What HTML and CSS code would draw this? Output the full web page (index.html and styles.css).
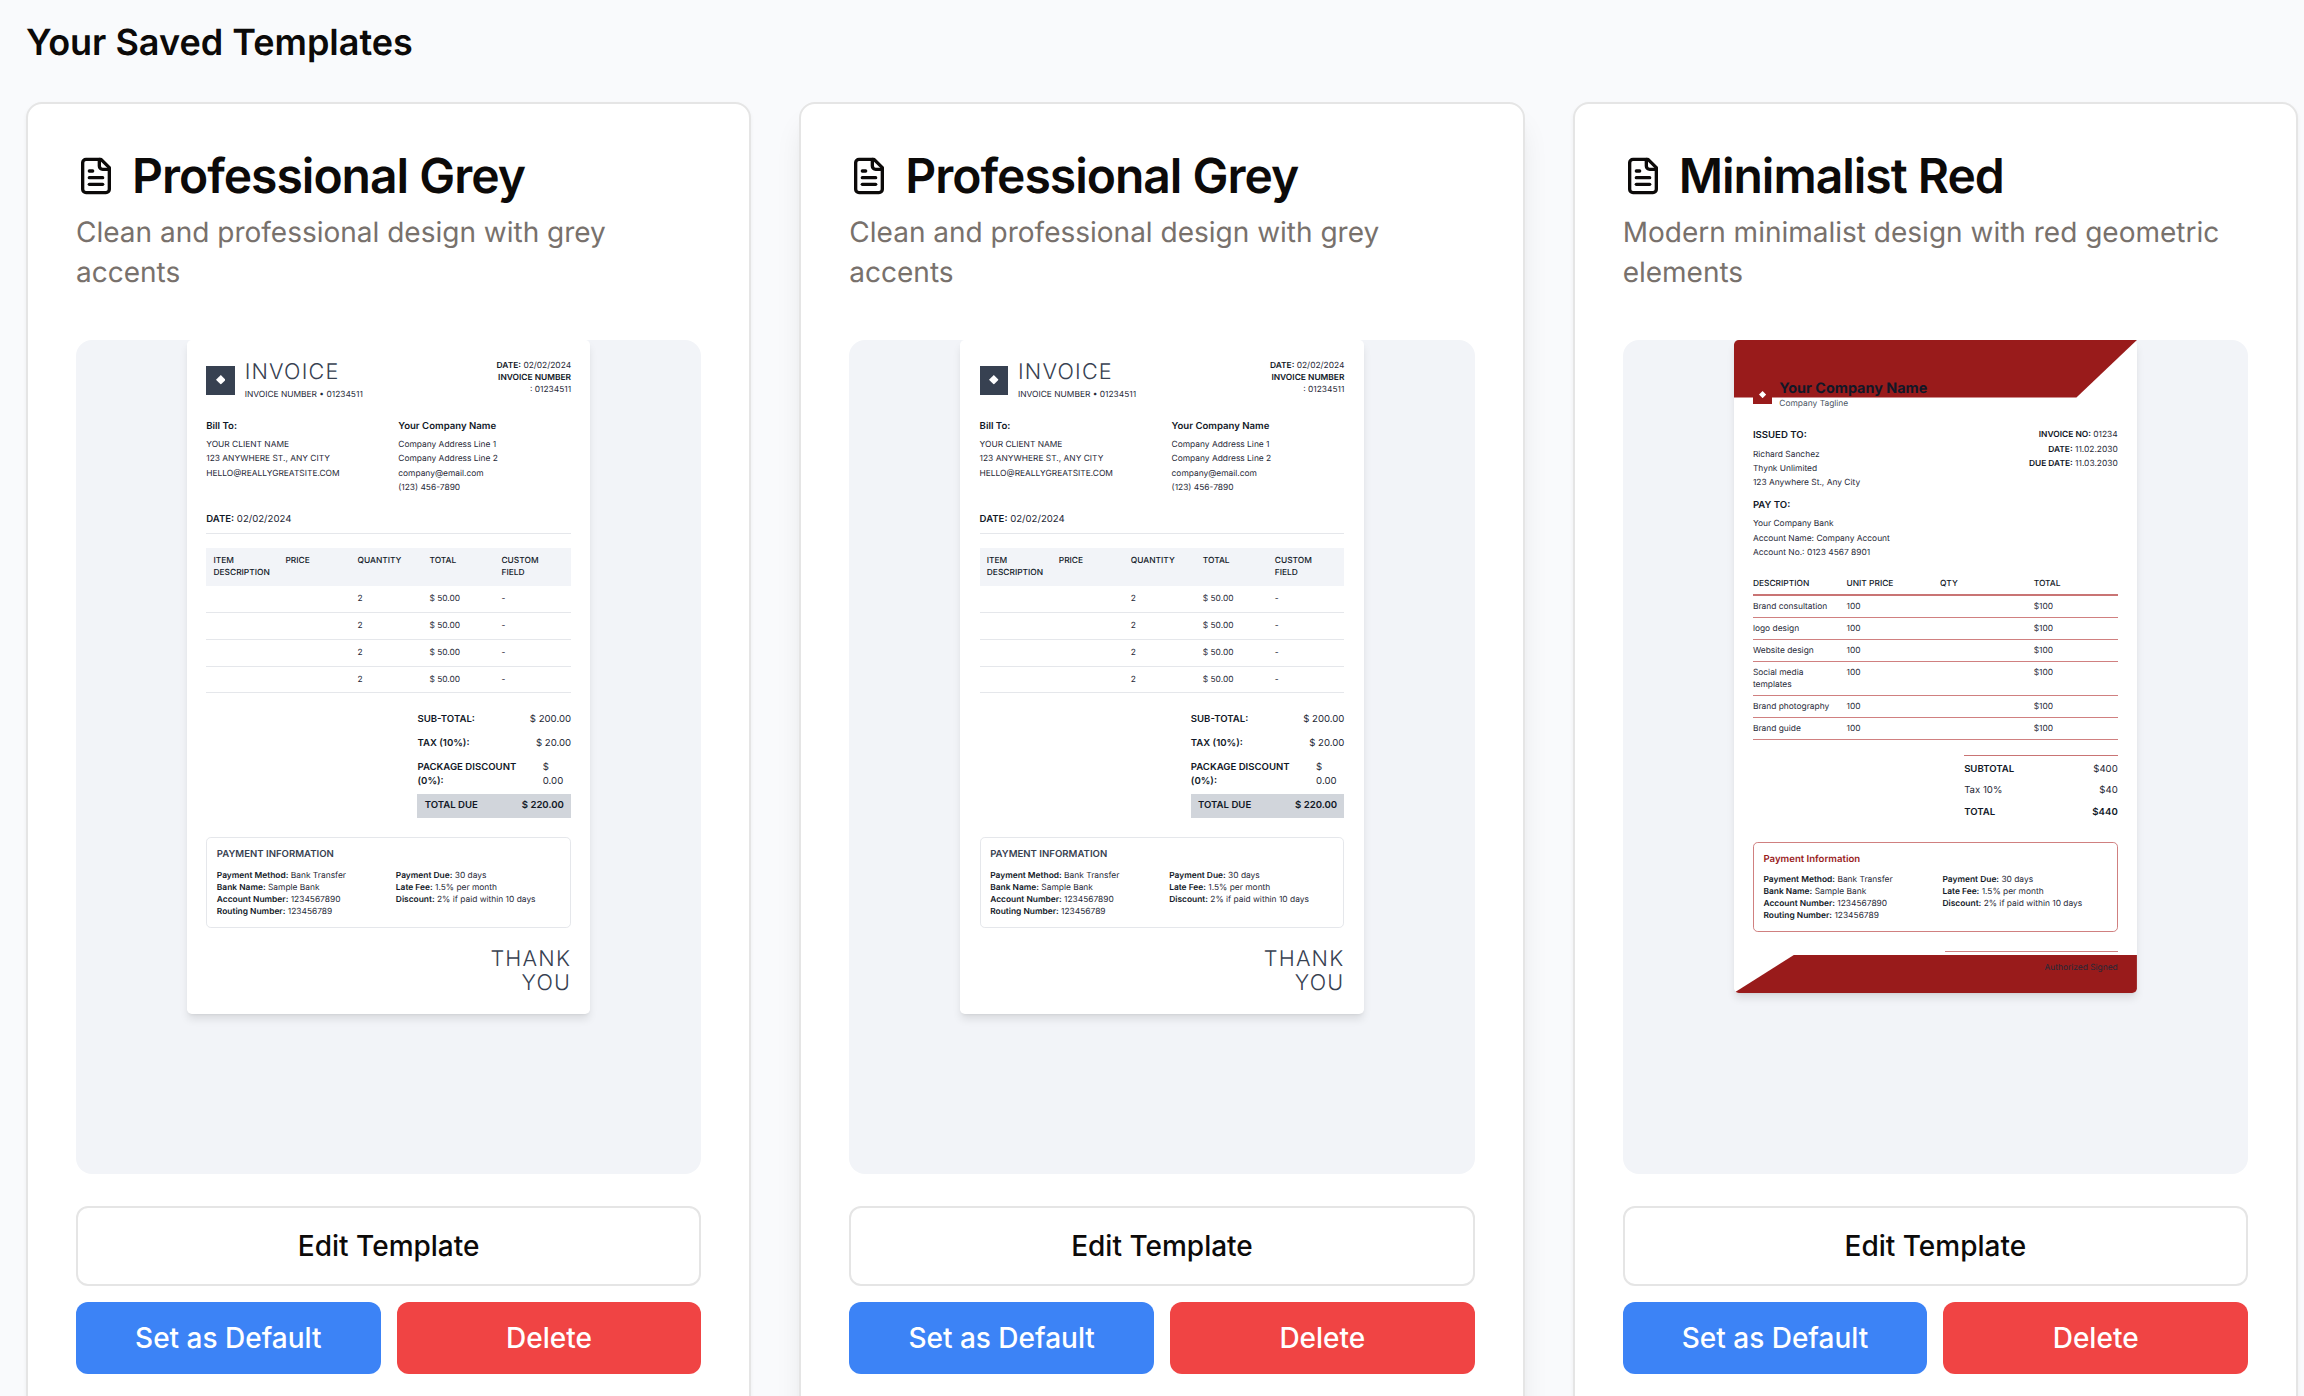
FILE: index.html
```html
<!DOCTYPE html>
<html lang="en">
<head>
<meta charset="utf-8">
<meta name="viewport" content="width=device-width, initial-scale=1">
<title>Your Saved Templates</title>
<link rel="stylesheet" href="styles.css">
</head>
<body>
<svg class="sprite" aria-hidden="true">
  <symbol id="file-text" viewBox="0 0 24 24">
    <path d="M15 2H6a2 2 0 0 0-2 2v16a2 2 0 0 0 2 2h12a2 2 0 0 0 2-2V7Z"/>
    <path d="M14 2v4a2 2 0 0 0 2 2h4"/>
    <path d="M10 9H8"/>
    <path d="M16 13H8"/>
    <path d="M16 17H8"/>
  </symbol>
  <symbol id="diamond" viewBox="0 0 16 16">
    <path d="M8 0L16 8L8 16L0 8Z"/>
  </symbol>
</svg>
<main class="page">
  <h2 class="page-title">Your Saved Templates</h2>
  <div class="cards">

    <article class="card">
      <header class="card-header">
        <h3 class="card-title"><svg class="icon"><use href="#file-text"/></svg>Professional Grey</h3>
        <p class="card-text">Clean and professional design with grey accents</p>
      </header>
      <div class="preview">
        <section class="doc grey">
          <div class="doc-head">
            <div class="brand">
              <div class="logo"><svg class="mark"><use href="#diamond"/></svg></div>
              <div>
                <h4 class="display">INVOICE</h4>
                <p class="number">INVOICE NUMBER • 01234511</p>
              </div>
            </div>
            <p class="meta"><b>DATE:</b> 02/02/2024<br><b>INVOICE NUMBER</b><br>: 01234511</p>
          </div>
          <div class="parties">
            <div class="lines"><h5>Bill To:</h5><p>YOUR CLIENT NAME</p><p>123 ANYWHERE ST., ANY CITY</p><p>HELLO@REALLYGREATSITE.COM</p></div>
            <div class="lines"><h5>Your Company Name</h5><p>Company Address Line 1</p><p>Company Address Line 2</p><p>company@email.com</p><p>(123) 456-7890</p></div>
          </div>
          <p class="dated"><b>DATE:</b> 02/02/2024</p>
          <table class="items">
            <thead><tr><th>ITEM DESCRIPTION</th><th>PRICE</th><th>QUANTITY</th><th>TOTAL</th><th>CUSTOM<br>FIELD</th></tr></thead>
            <tbody>
              <tr><td></td><td></td><td>2</td><td>$ 50.00</td><td>-</td></tr>
              <tr><td></td><td></td><td>2</td><td>$ 50.00</td><td>-</td></tr>
              <tr><td></td><td></td><td>2</td><td>$ 50.00</td><td>-</td></tr>
              <tr><td></td><td></td><td>2</td><td>$ 50.00</td><td>-</td></tr>
            </tbody>
          </table>
          <div class="totals">
            <div class="sum"><b>SUB-TOTAL:</b><span>$ 200.00</span></div>
            <div class="sum"><b>TAX (10%):</b><span>$ 20.00</span></div>
            <div class="sum"><b>PACKAGE DISCOUNT (0%):</b><span class="discount">$ 0.00</span></div>
            <div class="sum due"><b>TOTAL DUE</b><b>$ 220.00</b></div>
          </div>
          <div class="payment">
            <h5>PAYMENT INFORMATION</h5>
            <div class="payment-grid">
              <div><p><b>Payment Method:</b> Bank Transfer</p><p><b>Bank Name:</b> Sample Bank</p><p><b>Account Number:</b> 1234567890</p><p><b>Routing Number:</b> 123456789</p></div>
              <div><p><b>Payment Due:</b> 30 days</p><p><b>Late Fee:</b> 1.5% per month</p><p><b>Discount:</b> 2% if paid within 10 days</p></div>
            </div>
          </div>
          <p class="display thanks">THANK<br>YOU</p>
        </section>
      </div>
      <footer class="actions">
        <button type="button" class="btn outline">Edit Template</button>
        <div class="pair">
          <button type="button" class="btn primary">Set as Default</button>
          <button type="button" class="btn danger">Delete</button>
        </div>
      </footer>
    </article>

    <article class="card raised">
      <header class="card-header">
        <h3 class="card-title"><svg class="icon"><use href="#file-text"/></svg>Professional Grey</h3>
        <p class="card-text">Clean and professional design with grey accents</p>
      </header>
      <div class="preview">
        <section class="doc grey">
          <div class="doc-head">
            <div class="brand">
              <div class="logo"><svg class="mark"><use href="#diamond"/></svg></div>
              <div>
                <h4 class="display">INVOICE</h4>
                <p class="number">INVOICE NUMBER • 01234511</p>
              </div>
            </div>
            <p class="meta"><b>DATE:</b> 02/02/2024<br><b>INVOICE NUMBER</b><br>: 01234511</p>
          </div>
          <div class="parties">
            <div class="lines"><h5>Bill To:</h5><p>YOUR CLIENT NAME</p><p>123 ANYWHERE ST., ANY CITY</p><p>HELLO@REALLYGREATSITE.COM</p></div>
            <div class="lines"><h5>Your Company Name</h5><p>Company Address Line 1</p><p>Company Address Line 2</p><p>company@email.com</p><p>(123) 456-7890</p></div>
          </div>
          <p class="dated"><b>DATE:</b> 02/02/2024</p>
          <table class="items">
            <thead><tr><th>ITEM DESCRIPTION</th><th>PRICE</th><th>QUANTITY</th><th>TOTAL</th><th>CUSTOM<br>FIELD</th></tr></thead>
            <tbody>
              <tr><td></td><td></td><td>2</td><td>$ 50.00</td><td>-</td></tr>
              <tr><td></td><td></td><td>2</td><td>$ 50.00</td><td>-</td></tr>
              <tr><td></td><td></td><td>2</td><td>$ 50.00</td><td>-</td></tr>
              <tr><td></td><td></td><td>2</td><td>$ 50.00</td><td>-</td></tr>
            </tbody>
          </table>
          <div class="totals">
            <div class="sum"><b>SUB-TOTAL:</b><span>$ 200.00</span></div>
            <div class="sum"><b>TAX (10%):</b><span>$ 20.00</span></div>
            <div class="sum"><b>PACKAGE DISCOUNT (0%):</b><span class="discount">$ 0.00</span></div>
            <div class="sum due"><b>TOTAL DUE</b><b>$ 220.00</b></div>
          </div>
          <div class="payment">
            <h5>PAYMENT INFORMATION</h5>
            <div class="payment-grid">
              <div><p><b>Payment Method:</b> Bank Transfer</p><p><b>Bank Name:</b> Sample Bank</p><p><b>Account Number:</b> 1234567890</p><p><b>Routing Number:</b> 123456789</p></div>
              <div><p><b>Payment Due:</b> 30 days</p><p><b>Late Fee:</b> 1.5% per month</p><p><b>Discount:</b> 2% if paid within 10 days</p></div>
            </div>
          </div>
          <p class="display thanks">THANK<br>YOU</p>
        </section>
      </div>
      <footer class="actions">
        <button type="button" class="btn outline">Edit Template</button>
        <div class="pair">
          <button type="button" class="btn primary">Set as Default</button>
          <button type="button" class="btn danger">Delete</button>
        </div>
      </footer>
    </article>

    <article class="card">
      <header class="card-header">
        <h3 class="card-title"><svg class="icon"><use href="#file-text"/></svg>Minimalist Red</h3>
        <p class="card-text">Modern minimalist design with red geometric elements</p>
      </header>
      <div class="preview">
        <section class="doc red">
          <div class="banner"></div>
          <div class="brand">
            <div class="logo"><svg class="mark"><use href="#diamond"/></svg></div>
            <div>
              <h4 class="company">Your Company Name</h4>
              <p class="tagline">Company Tagline</p>
            </div>
          </div>
          <div class="issue">
            <div>
              <div class="lines"><h5>ISSUED TO:</h5><p>Richard Sanchez</p><p>Thynk Unlimited</p><p>123 Anywhere St., Any City</p></div>
              <div class="lines"><h5>PAY TO:</h5><p>Your Company Bank</p><p>Account Name: Company Account</p><p>Account No.: 0123 4567 8901</p></div>
            </div>
            <div class="lines refs"><p><b>INVOICE NO:</b> 01234</p><p><b>DATE:</b> 11.02.2030</p><p><b>DUE DATE:</b> 11.03.2030</p></div>
          </div>
          <table class="items">
            <thead><tr><th>DESCRIPTION</th><th>UNIT PRICE</th><th>QTY</th><th>TOTAL</th></tr></thead>
            <tbody>
              <tr><td>Brand consultation</td><td>100</td><td></td><td>$100</td></tr>
              <tr><td>logo design</td><td>100</td><td></td><td>$100</td></tr>
              <tr><td>Website design</td><td>100</td><td></td><td>$100</td></tr>
              <tr><td>Social media<br>templates</td><td>100</td><td></td><td>$100</td></tr>
              <tr><td>Brand photography</td><td>100</td><td></td><td>$100</td></tr>
              <tr><td>Brand guide</td><td>100</td><td></td><td>$100</td></tr>
            </tbody>
          </table>
          <div class="totals">
            <div class="sum"><b>SUBTOTAL</b><span>$400</span></div>
            <div class="sum"><span>Tax 10%</span><span>$40</span></div>
            <div class="sum"><b>TOTAL</b><b>$440</b></div>
          </div>
          <div class="payment">
            <h5>Payment Information</h5>
            <div class="payment-grid">
              <div><p><b>Payment Method:</b> Bank Transfer</p><p><b>Bank Name:</b> Sample Bank</p><p><b>Account Number:</b> 1234567890</p><p><b>Routing Number:</b> 123456789</p></div>
              <div><p><b>Payment Due:</b> 30 days</p><p><b>Late Fee:</b> 1.5% per month</p><p><b>Discount:</b> 2% if paid within 10 days</p></div>
            </div>
          </div>
          <div class="base"></div>
          <p class="signed">Authorized Signed</p>
        </section>
      </div>
      <footer class="actions">
        <button type="button" class="btn outline">Edit Template</button>
        <div class="pair">
          <button type="button" class="btn primary">Set as Default</button>
          <button type="button" class="btn danger">Delete</button>
        </div>
      </footer>
    </article>

  </div>
</main>
</body>
</html>
```
FILE: styles.css
```css
* { box-sizing: border-box; margin: 0; padding: 0; }

body {
  background: #f9fafc;
  color: #0c0a09;
  font-family: Inter, "Liberation Sans", sans-serif;
  text-rendering: geometricPrecision;
}

.sprite { display: none; }

.page { padding: 14px 6px 48px 26px; }

.page-title {
  font-size: 36px;
  line-height: 56px;
  font-weight: 600;
  margin-bottom: 32px;
}

.cards {
  display: grid;
  grid-template-columns: repeat(3, minmax(0, 1fr));
  gap: 48px;
}

.card {
  background: #fff;
  border: 2px solid #e5e5e5;
  border-radius: 16px;
  padding: 48px;
  box-shadow: 0 2px 4px rgb(0 0 0 / 5%);
}

.card.raised {
  box-shadow: 0 20px 30px -6px rgb(0 0 0 / 10%), 0 8px 12px -8px rgb(0 0 0 / 10%);
}

.card-header {
  display: flex;
  flex-direction: column;
  gap: 12px;
  margin-bottom: 48px;
}

.card-title {
  display: flex;
  align-items: center;
  gap: 16px;
  font-size: 48px;
  line-height: 48px;
  font-weight: 600;
  letter-spacing: -1px;
}

.icon {
  width: 40px;
  height: 40px;
  fill: none;
  stroke: currentColor;
  stroke-width: 2;
  stroke-linecap: round;
  stroke-linejoin: round;
}

.card-text {
  color: #78716c;
  font-size: 28px;
  line-height: 40px;
}

.preview {
  aspect-ratio: 3 / 4;
  display: flex;
  justify-content: center;
  align-items: flex-start;
  overflow: hidden;
  background: #f2f4f8;
  border-radius: 16px;
  margin-bottom: 32px;
}

.actions {
  display: flex;
  flex-direction: column;
  gap: 16px;
}

.pair {
  display: grid;
  grid-template-columns: 1fr 1fr;
  gap: 16px;
}

.btn {
  height: 72px;
  border: 0;
  border-radius: 12px;
  color: #fff;
  font: inherit;
  font-size: 28px;
  line-height: 40px;
  font-weight: 500;
  cursor: pointer;
}

.btn.outline {
  height: 80px;
  background: #fff;
  border: 2px solid #e5e5e5;
  color: #0c0a09;
}

.btn.primary { background: #3c83f6; }
.btn.danger { background: #f04444; }

/* Invoice thumbnails: full-size documents shown at 60% */

.doc {
  zoom: 0.6;
  position: relative;
  flex: none;
  width: 672px;
  padding: 33px 32px 32px;
  background: #fff;
  border-radius: 8px;
  box-shadow: 0 10px 15px -3px rgb(0 0 0 / 10%), 0 4px 6px -4px rgb(0 0 0 / 10%);
  color: #1f2937;
  font-size: 14px;
  line-height: 20px;
}

.doc b {
  color: #111827;
  font-weight: 600;
}

.doc h5 {
  color: #111827;
  font-size: 16px;
  line-height: 24px;
  font-weight: 600;
}

.brand {
  display: flex;
  align-items: center;
  gap: 16px;
}

.logo {
  display: flex;
  align-items: center;
  justify-content: center;
  width: 48px;
  height: 48px;
  background: #374151;
}

.mark {
  width: 16px;
  height: 16px;
  fill: #fff;
}

.doc-head {
  display: flex;
  justify-content: space-between;
  align-items: flex-start;
  margin-bottom: 32px;
}

.display {
  color: #374151;
  font-size: 36px;
  line-height: 40px;
  font-weight: 300;
  letter-spacing: 2px;
}

.number { margin-top: 8px; }

.meta { text-align: right; }

.parties {
  display: grid;
  grid-template-columns: 1fr 1fr;
  gap: 32px;
  margin-bottom: 32px;
}

.lines {
  display: flex;
  flex-direction: column;
  gap: 4px;
}

.lines h5 { margin-bottom: 4px; }

.dated {
  font-size: 16px;
  line-height: 24px;
  padding-bottom: 8px;
  border-bottom: 1px solid #e5e7eb;
  margin-bottom: 24px;
}

.items {
  width: 100%;
  table-layout: fixed;
  border-spacing: 0;
  margin-bottom: 24px;
}

.items th,
.items td {
  text-align: left;
  vertical-align: top;
  font-weight: 400;
}

.items th {
  color: #111827;
  font-weight: 500;
}

.grey .items th,
.grey .items td {
  width: 120px;
  padding: 12px 4px 12px 12px;
}

.grey .items th:last-child { width: auto; }
.grey .items th { background: #f2f4f8; }

.grey .items td {
  height: 44px;
  padding-bottom: 11px;
  border-bottom: 1px solid #e5e7eb;
}

.totals {
  width: 256px;
  margin-left: auto;
}

.sum {
  display: flex;
  justify-content: space-between;
  font-size: 16px;
  line-height: 24px;
}

.grey .sum { padding: 8px 0; }

.discount { width: 48px; }

.grey .due {
  padding: 8px 12px;
  background: #d1d5db;
}

.payment {
  border: 1px solid #e5e7eb;
  border-radius: 8px;
  padding: 16px 16px 15px;
  margin: 32px 0;
}

.doc .payment h5 {
  color: #374151;
  font-weight: 600;
  margin-bottom: 12px;
}

.payment-grid {
  display: grid;
  grid-template-columns: 1fr 1fr;
  gap: 24px;
}

.thanks { text-align: right; }

.doc.red { padding-top: 65px; }

.banner {
  position: absolute;
  inset: 0 0 auto 0;
  height: 96px;
  background: #991b1b;
  border-radius: 8px 0 0 0;
  clip-path: polygon(0 0, 100% 0, 85% 100%, 0 100%);
}

.base {
  position: absolute;
  inset: auto 0 0 0;
  height: 64px;
  background: #991b1b;
  border-radius: 0 0 8px 8px;
  clip-path: polygon(15% 0, 100% 0, 100% 100%, 0 100%);
}

.red .brand {
  position: relative;
  gap: 12px;
  margin-bottom: 32px;
}

.red .logo {
  width: 32px;
  height: 32px;
  background: #991b1b;
}

.red .mark {
  width: 12px;
  height: 12px;
}

.company {
  color: #111827;
  font-size: 24px;
  line-height: 32px;
  font-weight: 700;
}

.tagline { color: #4b5563; }

.issue {
  display: flex;
  justify-content: space-between;
  align-items: flex-start;
  margin-bottom: 32px;
}

.issue .lines + .lines { margin-top: 16px; }
.refs { text-align: right; }

.red .items th {
  width: 156px;
  padding: 0 16px 7px 0;
  border-bottom: 4px solid #c97474;
}

.red .items th:last-child { width: auto; }

.red .items td {
  padding: 8px 4px 7px 0;
  border-bottom: 1px solid #d08080;
}

.red .totals {
  display: flex;
  flex-direction: column;
  gap: 12px;
  padding: 12px 0;
  border-top: 1px solid #c97474;
}

.red .payment {
  border-color: #d08080;
  margin-top: 24px;
}

.doc.red .payment h5 { color: #991b1b; }

.signed {
  position: relative;
  width: 288px;
  margin-left: auto;
  padding-top: 16px;
  border-top: 1px solid #d08080;
  text-align: right;
}
```
